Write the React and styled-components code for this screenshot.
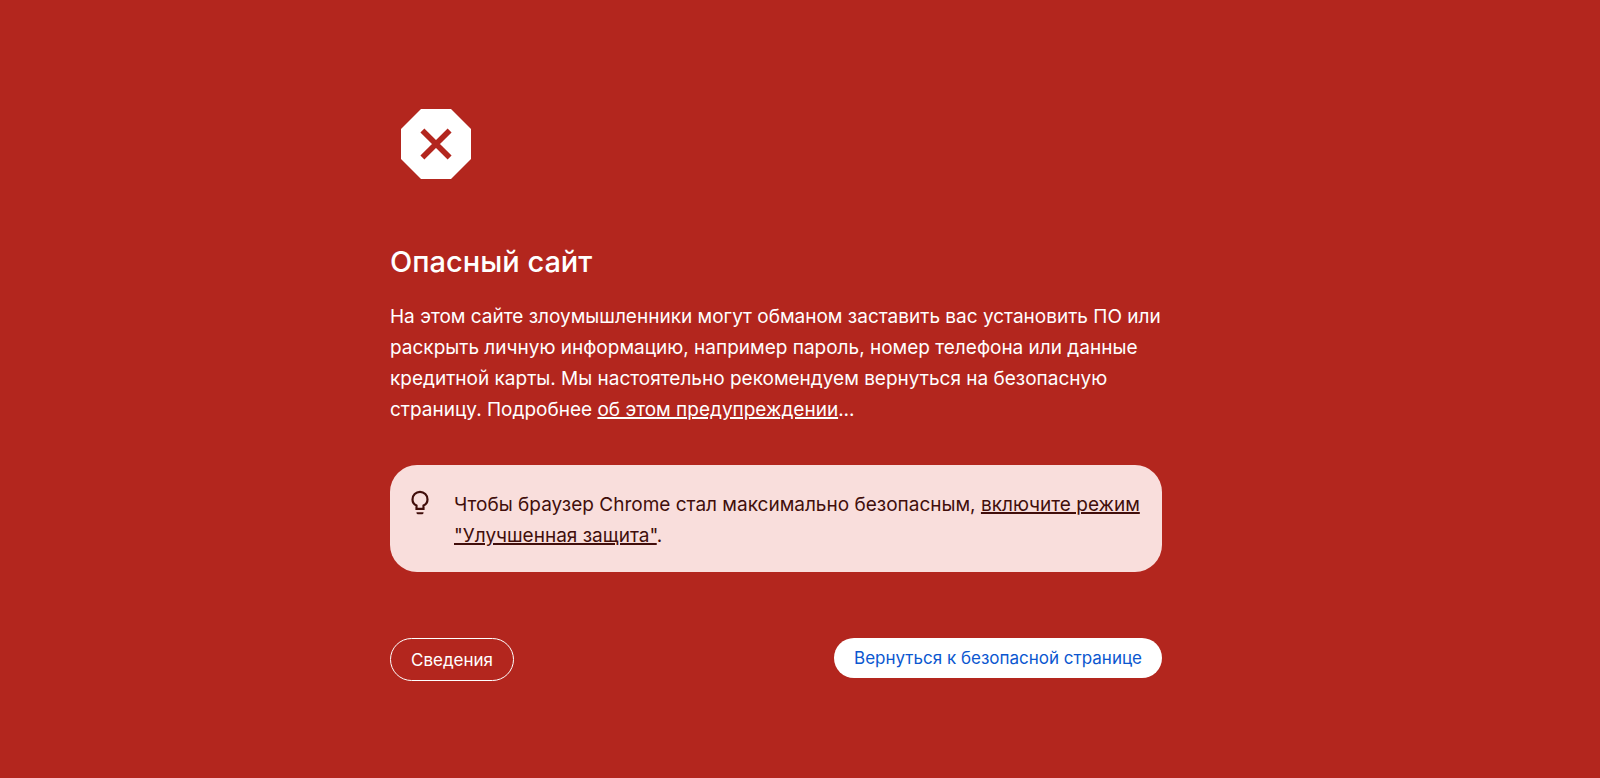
import React from 'react';
import styled, { createGlobalStyle } from 'styled-components';

export default function App() {
    return(
        <>
            <GlobalStyle />
            <Page>
                <Content>
                    <StopSign />
                    <Title>Опасный сайт</Title>
                    <Message>
                        На этом сайте злоумышленники могут обманом заставить вас установить ПО или раскрыть личную информацию, например пароль, номер телефона или данные кредитной карты. Мы настоятельно рекомендуем вернуться на безопасную страницу. Подробнее <Link href="#warning">об этом предупреждении</Link>...
                    </Message>
                    <Tip>
                        <Bulb />
                        <TipText>
                            Чтобы браузер Chrome стал максимально безопасным, <Link href="#protection">включите режим "Улучшенная защита"</Link>.
                        </TipText>
                    </Tip>
                    <Actions>
                        <DetailsButton type="button">Сведения</DetailsButton>
                        <BackButton type="button">Вернуться к безопасной странице</BackButton>
                    </Actions>
                </Content>
            </Page>
        </>
    )
}

const StopSign = () => (
    <StopIcon viewBox="0 0 92 92" aria-hidden="true">
        <path d="M31 11h30l20 20v30l-20 20H31L11 61V31z" fill="#fff" />
        <path d="M32.4 32.4l27.2 27.2M59.6 32.4L32.4 59.6" stroke="#b3261e" strokeWidth="5.6" />
    </StopIcon>
)

const Bulb = () => (
    <BulbIcon viewBox="0 0 20 28" aria-hidden="true">
        <path
            d="M6.5 19.8v-3.2C4 15.3 2.5 13.1 2.5 10.4a7.5 7.5 0 0 1 15 0c0 2.7-1.5 4.9-4 6.2v3.2z"
            fill="none"
            stroke="#410e0b"
            strokeWidth="2.2"
        />
        <path d="M6.5 23.3h7v.5a1.5 1.5 0 0 1-1.5 1.5H8a1.5 1.5 0 0 1-1.5-1.5z" fill="#410e0b" />
    </BulbIcon>
)

const GlobalStyle = createGlobalStyle`
    body {
        margin: 0;
        background: #b3261e;
        font-family: Inter, "Liberation Sans", sans-serif;
    }
`

const Page = styled.main`
    display: flex;
    justify-content: center;
    padding: 98px 72px 48px 24px;
`

const Content = styled.div`
    display: flex;
    flex-direction: column;
    width: 100%;
    max-width: 772px;
    color: #fff;
`

const StopIcon = styled.svg`
    width: 92px;
    height: 92px;
`

const Title = styled.h1`
    margin: 52px 0 0;
    font-size: 29px;
    font-weight: 500;
    line-height: 40px;
`

const Message = styled.p`
    margin: 19px 0 0;
    font-size: 19px;
    line-height: 31px;
`

const Link = styled.a`
    color: inherit;
    text-decoration: underline;
    text-decoration-thickness: 2px;
`

const Tip = styled.aside`
    display: flex;
    align-items: flex-start;
    gap: 24px;
    margin-top: 40px;
    padding: 24px 20px 21px;
    border-radius: 27px;
    background: #f9dedc;
    color: #410e0b;
`

const BulbIcon = styled.svg`
    flex: none;
    width: 20px;
    height: 28px;
`

const TipText = styled.p`
    margin: 0;
    font-size: 19px;
    line-height: 31px;
`

const Actions = styled.div`
    display: flex;
    flex-wrap: wrap;
    align-items: flex-start;
    justify-content: space-between;
    gap: 16px;
    margin-top: 66px;
`

const Button = styled.button`
    padding: 0 20px;
    border: none;
    border-radius: 22px;
    font-family: inherit;
    font-size: 17px;
    cursor: pointer;
`

const DetailsButton = styled(Button)`
    height: 43px;
    border: 1px solid #fff;
    background: transparent;
    color: #fff;
`

const BackButton = styled(Button)`
    height: 40px;
    background: #fff;
    color: #0b57d0;
`
